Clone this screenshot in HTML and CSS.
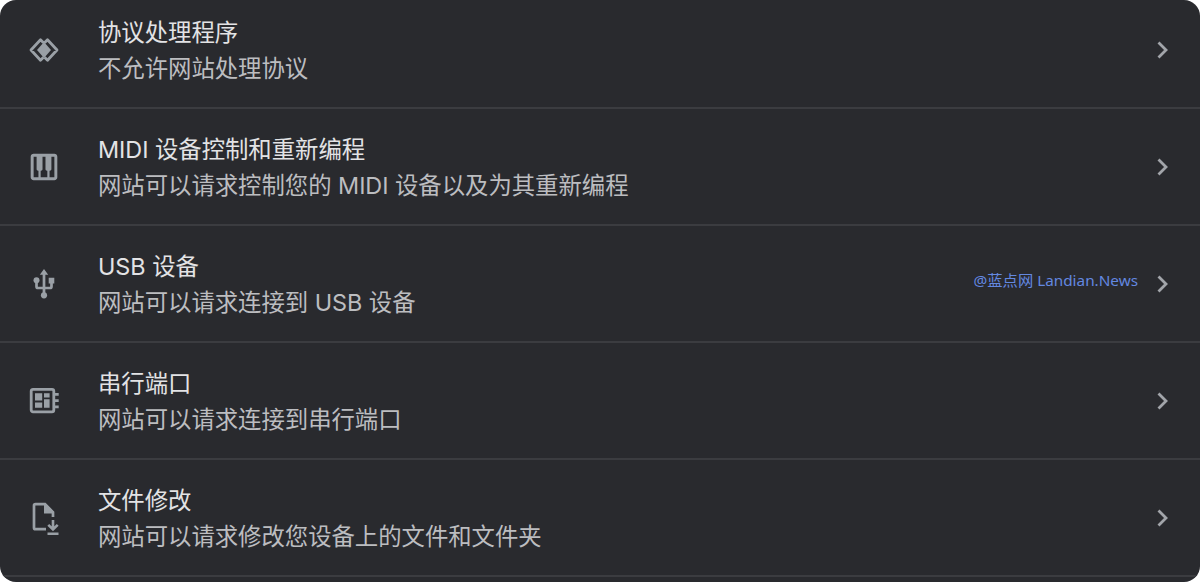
FILE: index.html
```html
<!DOCTYPE html>
<html lang="zh-CN">
<head>
<meta charset="utf-8">
<title>网站设置</title>
<link rel="stylesheet" href="styles.css">
</head>
<body>
<main class="panel">
  <section class="row">
    <svg class="icon" viewBox="0 0 36 36"><g fill="none" stroke="currentColor" stroke-width="2.800" stroke-linejoin="round"><path d="M17.500 10.800 14.500 7.800 5 18l9.500 10.200L17.500 25.200M18.500 10.800l3-3L31 18l-9.500 10.200-3-3"/></g><path d="M18 10 25 18 18 26 11 18z" fill="currentColor"/></svg>
    <div class="text"><div class="title">协议处理程序</div><div class="desc">不允许网站处理协议</div></div>
    <svg class="arrow" viewBox="0 0 16 20"><path d="m3.500 2.500 7.500 7.500-7.500 7.500"/></svg>
  </section>
  <section class="row">
    <svg class="icon" viewBox="3 3 18 18"><path fill="currentColor" fill-rule="evenodd" transform="translate(12 12) scale(.74) translate(-12 -12)" d="M19 3H5c-1.100 0-2 .900-2 2v14c0 1.100.900 2 2 2h14c1.100 0 2-.900 2-2V5c0-1.100-.900-2-2-2zM14 14.500h.250V19h-4.500v-4.500H10c.550 0 1-.450 1-1V5h2v8.500c0 .550.450 1 1 1zM5 5h2v8.500c0 .550.450 1 1 1h.250V19H5V5zM19 19h-3.250v-4.500H16c.550 0 1-.450 1-1V5h2v14z"/></svg>
    <div class="text"><div class="title">MIDI 设备控制和重新编程</div><div class="desc">网站可以请求控制您的 MIDI 设备以及为其重新编程</div></div>
    <svg class="arrow" viewBox="0 0 16 20"><path d="m3.500 2.500 7.500 7.500-7.500 7.500"/></svg>
  </section>
  <section class="row">
    <svg class="icon" viewBox="0 0 36 36"><path d="M18 7v22M10.500 14v6.500a1.500 1.500 0 0 0 1.500 1.500h12a1.500 1.500 0 0 0 1.500-1.500V14" fill="none" stroke="currentColor" stroke-width="2.700"/><path fill="currentColor" d="m18 3 4.200 5.800h-8.400zM22.700 11.800h5.600v5.600h-5.600z"/><circle cx="10.500" cy="14.300" r="3" fill="currentColor"/><circle cx="18" cy="29.300" r="3.100" fill="currentColor"/></svg>
    <div class="text"><div class="title">USB 设备</div><div class="desc">网站可以请求连接到 USB 设备</div></div>
    <span class="credit">@蓝点网 Landian.News</span>
    <svg class="arrow" viewBox="0 0 16 20"><path d="m3.500 2.500 7.500 7.500-7.500 7.500"/></svg>
  </section>
  <section class="row">
    <svg class="icon" viewBox="0 0 36 36"><rect x="5.200" y="6.300" width="22.600" height="22.600" rx="1.800" fill="none" stroke="currentColor" stroke-width="2.800"/><path fill="currentColor" d="M9 10.200h7.200v7.300H9zM9 19.500h7.200v5.300H9zM18 10.200h5.600v4.300H18zM18 16.200h5.600v8.600H18zM28 10h4.700v2.800H28zM28 16.300h4.700v2.800H28zM28 22.500h4.700v2.800H28z"/></svg>
    <div class="text"><div class="title">串行端口</div><div class="desc">网站可以请求连接到串行端口</div></div>
    <svg class="arrow" viewBox="0 0 16 20"><path d="m3.500 2.500 7.500 7.500-7.500 7.500"/></svg>
  </section>
  <section class="row">
    <svg class="icon" viewBox="0 0 36 36"><path d="M20 29.200H9.500a1.500 1.500 0 0 1-1.500-1.500V5.700a1.500 1.500 0 0 1 1.500-1.500H19l8 8V17" fill="none" stroke="currentColor" stroke-width="2.700"/><path fill="currentColor" d="M18 4h2l8 8v1.500H18zM21.500 32.500h11v2.600h-11z"/><path d="M27 20v9M22.300 24.800l4.700 4.700 4.700-4.700" fill="none" stroke="currentColor" stroke-width="2.600"/></svg>
    <div class="text"><div class="title">文件修改</div><div class="desc">网站可以请求修改您设备上的文件和文件夹</div></div>
    <svg class="arrow" viewBox="0 0 16 20"><path d="m3.500 2.500 7.500 7.500-7.500 7.500"/></svg>
  </section>
</main>
</body>
</html>
```
FILE: styles.css
```css
body {
  margin: 0;
  background: #fff;
  font-family: Inter, "Noto Sans CJK SC", sans-serif;
}
.panel {
  box-sizing: border-box;
  height: 582px;
  overflow: hidden;
  border-radius: 16px;
  background: #292a2e;
}
.row {
  box-sizing: border-box;
  display: flex;
  align-items: center;
  height: 117px;
  padding: 0 29px 0 26px;
  border-bottom: 2px solid #3b3c40;
}
.row:first-child {
  height: 109px;
  padding-bottom: 8px;
}
.icon {
  flex: none;
  width: 36px;
  height: 36px;
  margin-right: 36px;
  color: #9aa0a6;
}
.text {
  flex: 1;
  padding-top: 2px;
  font-size: 23.400px;
  line-height: 36px;
  letter-spacing: -0.040px;
  white-space: nowrap;
}
.title {
  color: #e3e3e5;
}
.desc {
  color: #bcbdc0;
}
.credit {
  margin: 0 17px 8px 0;
  color: #6388e0;
  font-family: "Noto Sans", "Noto Sans CJK SC", sans-serif;
  font-size: 15.300px;
  line-height: 22px;
  white-space: nowrap;
}
.arrow {
  flex: none;
  width: 16px;
  height: 20px;
  fill: none;
  stroke: #a2a5aa;
  stroke-width: 2.800;
}
```
